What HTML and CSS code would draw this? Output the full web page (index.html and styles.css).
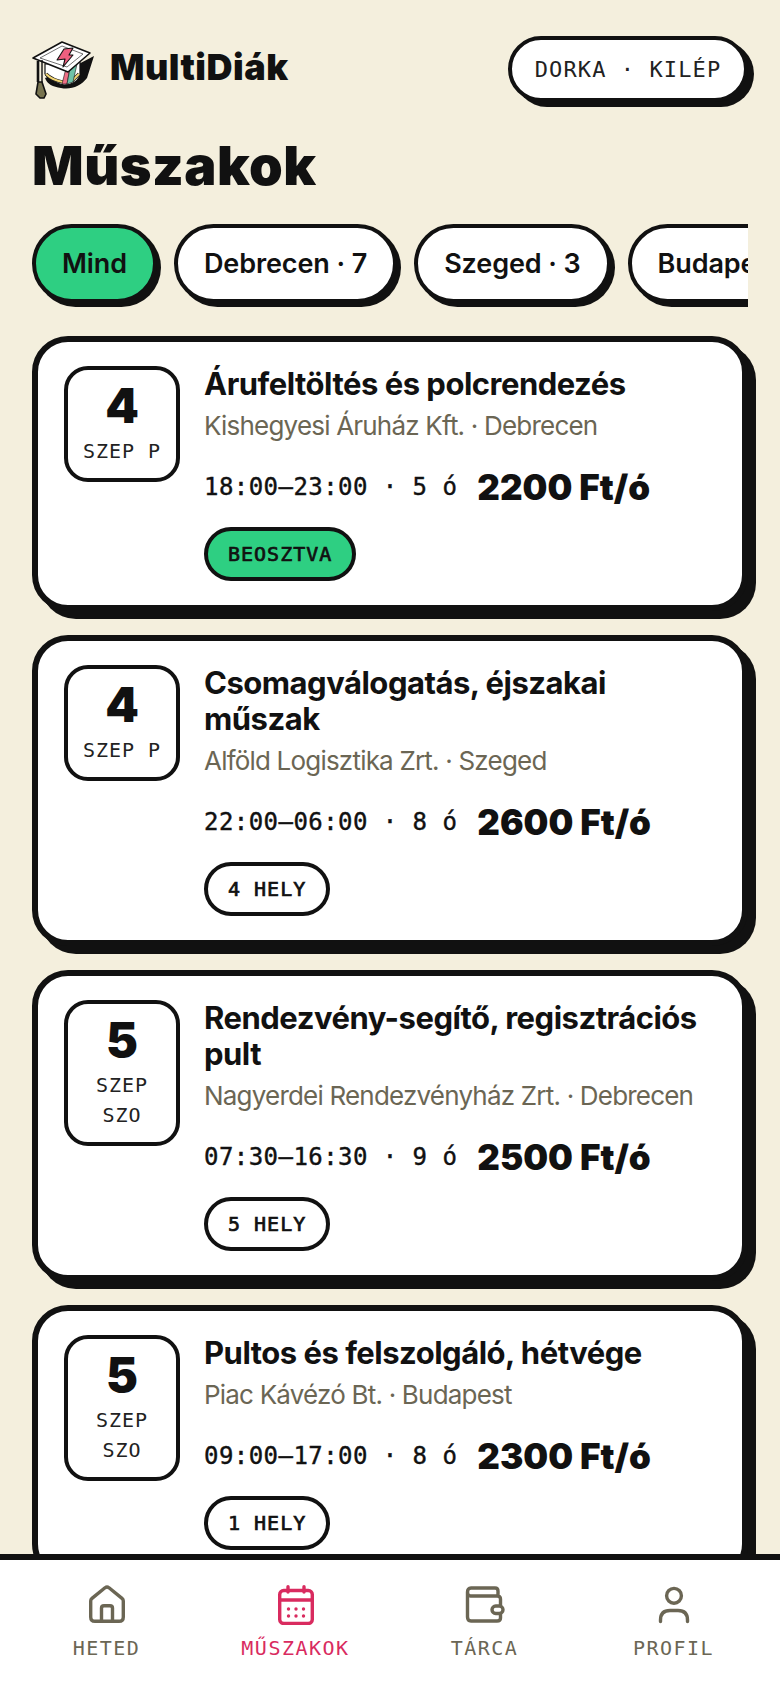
FILE: index.html
```html
<!DOCTYPE html>
<html lang="hu">
<head>
    <meta charset="UTF-8">
    <meta name="viewport" content="width=device-width, initial-scale=1.0">
    <title>MultiDiák</title>
    <link rel="stylesheet" href="styles.css">
</head>
<body>
    <div class="screen">
        <div class="content">
            <div class="header">
                <div class="brand">
                    <!-- sapka logo -->
                    <svg class="logo" viewBox="0 0 64 64" width="64" height="64">
                        <path d="M40 30 L63 18 L56 40 C50 48 40 52 30 50 C22 49 16 46 14 40 Z" fill="#111"/>
                        <path d="M14 26 V36 C18 42 26 46 33 47 C40 47 46 44 49 38 V24 Z" fill="#fff" stroke="#111" stroke-width="1.2"/>
                        <path d="M15 36 C20 41 26 43 32 44 M41 43 L48 36" fill="none" stroke="#111" stroke-width="3.2"/>
                        <path d="M15 36 C20 41 26 43 32 44 M41 43 L48 36" fill="none" stroke="#f2d675" stroke-width="2"/>
                        <path d="M34 34 L39 30 L36 46 L31 46 Z" fill="#ee6f86" stroke="#111" stroke-width=".6"/>
                        <path d="M39 30 L46 26 L42 44 L36 46 Z" fill="#6fc2a8" stroke="#111" stroke-width=".6"/>
                        <path d="M2 20 L31 4 L59 15 L37 34 Z" fill="#fff" stroke="#111" stroke-width="1.6" stroke-linejoin="round"/>
                        <path d="M9 20 L31 8 L52 16 L36 29 Z" fill="none" stroke="#111" stroke-width=".6"/>
                        <path d="M33 11 L42 10 L38 17 L42 17 L32 29 L34 21 L26 22 Z" fill="#ee5f7f" stroke="#111" stroke-width="1.1" stroke-linejoin="round"/>
                        <path d="M7 23 V44" stroke="#111" stroke-width="2.6"/>
                        <path d="M11 22 V44" stroke="#111" stroke-width="1.4"/>
                        <path d="M7 44 H11 L15 56 L13 60 H9 L5 56 Z" fill="#77734f" stroke="#111" stroke-width="1.6"/>
                    </svg>
                    <span class="brand-name">MultiDiák</span>
                </div>
                <button class="logout-btn">DORKA · KILÉP</button>
            </div>

            <h1 class="page-title">Műszakok</h1>

            <div class="chips">
                <div class="chip chip-active">Mind</div>
                <div class="chip">Debrecen · 7</div>
                <div class="chip">Szeged · 3</div>
                <div class="chip">Budapest · 2</div>
            </div>

            <div class="shift-list">
                <div class="shift-card">
                    <div class="date-box">
                        <div class="date-day">4</div>
                        <div class="date-label">SZEP P</div>
                    </div>
                    <div class="shift-info">
                        <div class="shift-title">Árufeltöltés és polcrendezés</div>
                        <div class="shift-company">Kishegyesi Áruház Kft. · Debrecen</div>
                        <div class="shift-row">
                            <span class="shift-time">18:00–23:00 · 5 ó</span>
                            <span class="shift-pay">2200 Ft/ó</span>
                        </div>
                        <span class="tag tag-green">BEOSZTVA</span>
                    </div>
                </div>

                <div class="shift-card">
                    <div class="date-box">
                        <div class="date-day">4</div>
                        <div class="date-label">SZEP P</div>
                    </div>
                    <div class="shift-info">
                        <div class="shift-title">Csomagválogatás, éjszakai műszak</div>
                        <div class="shift-company">Alföld Logisztika Zrt. · Szeged</div>
                        <div class="shift-row">
                            <span class="shift-time">22:00–06:00 · 8 ó</span>
                            <span class="shift-pay">2600 Ft/ó</span>
                        </div>
                        <span class="tag">4 HELY</span>
                    </div>
                </div>

                <div class="shift-card">
                    <div class="date-box">
                        <div class="date-day">5</div>
                        <div class="date-label">SZEP SZO</div>
                    </div>
                    <div class="shift-info">
                        <div class="shift-title">Rendezvény-segítő, regisztrációs pult</div>
                        <div class="shift-company">Nagyerdei Rendezvényház Zrt. · Debrecen</div>
                        <div class="shift-row">
                            <span class="shift-time">07:30–16:30 · 9 ó</span>
                            <span class="shift-pay">2500 Ft/ó</span>
                        </div>
                        <span class="tag">5 HELY</span>
                    </div>
                </div>

                <div class="shift-card">
                    <div class="date-box">
                        <div class="date-day">5</div>
                        <div class="date-label">SZEP SZO</div>
                    </div>
                    <div class="shift-info">
                        <div class="shift-title">Pultos és felszolgáló, hétvége</div>
                        <div class="shift-company">Piac Kávézó Bt. · Budapest</div>
                        <div class="shift-row">
                            <span class="shift-time">09:00–17:00 · 8 ó</span>
                            <span class="shift-pay">2300 Ft/ó</span>
                        </div>
                        <span class="tag">1 HELY</span>
                    </div>
                </div>
            </div>
        </div>

        <div class="bottom-nav">
            <div class="nav-item">
                <svg class="nav-icon" viewBox="0 0 40 40" width="40" height="40">
                    <path d="M3.7 16 Q3.7 14.5 5 13.4 L18 2.8 Q20 1.4 22 2.8 L35 13.4 Q36.3 14.5 36.3 16 V32 Q36.3 36.3 32 36.3 H8 Q3.7 36.3 3.7 32 Z"/>
                    <path d="M14.5 36.3 V23 Q14.5 20.7 17 20.7 H23 Q25.5 20.7 25.5 23 V36.3"/>
                </svg>
                <span>HETED</span>
            </div>
            <div class="nav-item nav-active">
                <svg class="nav-icon" viewBox="0 0 40 40" width="40" height="40">
                    <rect x="3.7" y="5.5" width="32.6" height="33" rx="4"/>
                    <path d="M3.7 15 H36.3 M12 1.7 V7 M28 1.7 V7"/>
                    <g class="nav-dots">
                        <circle cx="12.5" cy="24" r="1.7"/><circle cx="20" cy="24" r="1.7"/><circle cx="27.5" cy="24" r="1.7"/>
                        <circle cx="12.5" cy="31" r="1.7"/><circle cx="20" cy="31" r="1.7"/><circle cx="27.5" cy="31" r="1.7"/>
                    </g>
                </svg>
                <span>MŰSZAKOK</span>
            </div>
            <div class="nav-item">
                <svg class="nav-icon" viewBox="0 0 40 40" width="40" height="40">
                    <path d="M33 11 V6 Q33 3 30 3 H6 Q2.5 3 2.5 7 V32 Q2.5 36 6 36 H32 Q35.5 36 35.5 33 V14 Q35.5 11 32 11 H5.5 Q2.5 11 2.5 7"/>
                    <rect class="nav-clasp" x="27" y="21" width="11" height="7.5" rx="3.7"/>
                </svg>
                <span>TÁRCA</span>
            </div>
            <div class="nav-item">
                <svg class="nav-icon" viewBox="0 0 40 40" width="40" height="40">
                    <circle cx="20" cy="10.8" r="7.4"/>
                    <path d="M6.5 36.5 V35 Q6.5 25.5 16 25.5 H24 Q33.5 25.5 33.5 35 V36.5"/>
                </svg>
                <span>PROFIL</span>
            </div>
        </div>
    </div>
</body>
</html>
```

FILE: styles.css
```css
* {
    box-sizing: border-box;
}

html, body {
    margin: 0;
    padding: 0;
}

body {
    font-family: Inter, "Noto Sans", sans-serif;
    background-color: #f4efdd;
    color: #111;
}

.screen {
    height: 100vh;
    display: flex;
    flex-direction: column;
    overflow: hidden;
}

.content {
    flex: 1;
    min-height: 0;
    overflow: hidden;
    padding: 36px 32px 0;
}

.header {
    display: flex;
    justify-content: space-between;
    align-items: flex-start;
}

.brand {
    display: flex;
    align-items: center;
    gap: 15px;
    padding-top: 2px;
    margin-left: -1px;
}

.brand-name {
    font-size: 36px;
    font-weight: 900;
    letter-spacing: 0.5px;
    margin-bottom: 6px;
}

.logout-btn {
    width: 240px;
    height: 66px;
    background-color: #fff;
    border: 4px solid #111;
    border-radius: 33px;
    box-shadow: 6px 5px 0 #111;
    font-family: "DejaVu Sans Mono", monospace;
    font-size: 22px;
    letter-spacing: 1.1px;
    color: #222;
    padding: 0;
}

.page-title {
    margin: 32px 0 26px;
    font-size: 54px;
    line-height: 64px;
    font-weight: 900;
    letter-spacing: 0.5px;
}

.chips {
    display: flex;
    gap: 17px;
    overflow: hidden;
    padding-bottom: 4px;
    margin-bottom: 29px;
}

.chip {
    flex: none;
    height: 79px;
    padding: 0 26px;
    display: flex;
    align-items: center;
    background-color: #fff;
    border: 4px solid #111;
    border-radius: 40px;
    box-shadow: 4px 4px 0 #111;
    font-size: 27px;
    font-weight: 600;
    letter-spacing: -0.1px;
}

.chip-active {
    background-color: #2ecf82;
}

.shift-list {
    display: flex;
    flex-direction: column;
    gap: 24px;
}

.shift-card {
    display: flex;
    gap: 24px;
    background-color: #fff;
    border: 6px solid #111;
    border-radius: 36px;
    box-shadow: 8px 8px 0 #111;
    padding: 24px 26px;
}

.date-box {
    flex: none;
    width: 116px;
    align-self: flex-start;
    border: 4px solid #111;
    border-radius: 24px;
    padding: 8px 0 12px;
    text-align: center;
}

.date-day {
    font-size: 48px;
    line-height: 56px;
    font-weight: 900;
}

.date-label {
    font-family: "DejaVu Sans Mono", monospace;
    font-size: 20px;
    line-height: 30px;
    letter-spacing: 1px;
    margin-top: 2px;
    padding: 0 10px;
    color: #222;
}

.shift-info {
    flex: 1;
    min-width: 0;
}

.shift-title {
    font-size: 31px;
    line-height: 36px;
    font-weight: 700;
    letter-spacing: -0.5px;
}

.shift-company {
    font-size: 26px;
    line-height: 36px;
    color: #6b6654;
    letter-spacing: -0.8px;
    margin-top: 6px;
}

.shift-row {
    display: flex;
    align-items: center;
    gap: 20px;
    margin: 21px 0 18px;
    height: 44px;
}

.shift-time {
    font-family: "DejaVu Sans Mono", monospace;
    font-size: 24px;
    letter-spacing: 0.45px;
    -webkit-text-stroke: 0.4px #111;
}

.shift-pay {
    font-size: 35px;
    font-weight: 900;
}

.tag {
    display: block;
    width: fit-content;
    height: 54px;
    line-height: 46px;
    padding: 0 20px;
    border: 4px solid #111;
    border-radius: 27px;
    font-family: "DejaVu Sans Mono", monospace;
    font-size: 20px;
    letter-spacing: 1px;
    -webkit-text-stroke: 0.7px #111;
}

.tag-green {
    background-color: #2ecf82;
}

.bottom-nav {
    flex: none;
    height: 134px;
    background-color: #fff;
    border-top: 6px solid #111;
    padding: 25px 12px 0;
    display: grid;
    grid-template-columns: repeat(4, 1fr);
}

.nav-item {
    display: flex;
    flex-direction: column;
    align-items: center;
    gap: 11px;
    color: #6b6654;
    font-family: "DejaVu Sans Mono", monospace;
    font-size: 20px;
    letter-spacing: 1.5px;
}

.nav-icon {
    fill: none;
    stroke: currentColor;
    stroke-width: 3.4;
    stroke-linecap: round;
    stroke-linejoin: round;
}

.nav-clasp {
    fill: #fff;
}

.nav-dots {
    fill: currentColor;
    stroke: none;
}

.nav-active {
    color: #d92b5f;
}
```
